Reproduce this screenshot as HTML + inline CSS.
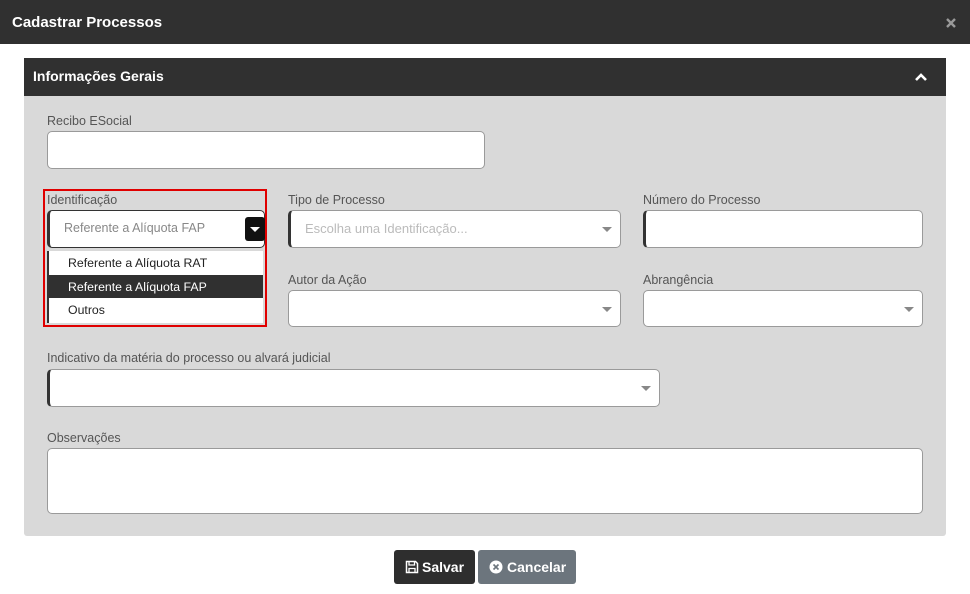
<!DOCTYPE html>
<html><head><meta charset="utf-8"><style>
*{box-sizing:border-box;margin:0;padding:0}
body{width:970px;height:594px;background:#fff;font-family:"Liberation Sans",Arial,sans-serif;position:relative;overflow:hidden}
.a{position:absolute}
.top{left:0;top:0;width:970px;height:44px;background:#303030}
.top h1{position:absolute;left:12px;top:14px;font-size:15px;color:#fff;font-weight:bold}
.ph{left:24px;top:58px;width:922px;height:38px;background:#303030}
.ph span{position:absolute;left:9px;top:10px;font-size:14px;color:#fff;font-weight:bold}
.pb{left:24px;top:96px;width:922px;height:440px;background:#d9d9d9;border-radius:0 0 3px 3px}
.lb{font-size:12.5px;color:#555}
.in{background:#fff;border:1px solid #9a9a9a;border-radius:5px}
.dl{border-left:3px solid #333}
.car{position:absolute;right:8px;top:50%;margin-top:-2px;width:0;height:0;border-left:5px solid transparent;border-right:5px solid transparent;border-top:5px solid #888}
.ph2{font-size:13px;color:#bbb;position:absolute;left:14px;top:10px}
.opt{position:absolute;left:0;width:214px;height:23px;font-size:12.3px;padding:5px 0 0 19px;color:#222}
.btn{top:550px;height:34px;border-radius:3px;color:#fff;font-weight:bold;font-size:14px}
</style></head><body>
<div class="a top"><h1>Cadastrar Processos</h1>
<svg class="a" style="left:946px;top:18px" width="10" height="10"><path d="M1 1L9 9M9 1L1 9" stroke="#999" stroke-width="2.4"/></svg></div>
<div class="a ph"><span>Informações Gerais</span>
<svg class="a" style="left:891px;top:15px" width="12" height="8"><path d="M1 7L6 2L11 7" stroke="#fff" stroke-width="2.6" fill="none"/></svg></div>
<div class="a pb"></div>

<div class="a lb" style="left:47px;top:114px">Recibo ESocial</div>
<div class="a in" style="left:47px;top:131px;width:438px;height:38px"></div>

<div class="a lb" style="left:47px;top:193px">Identificação</div>
<div class="a in dl" style="left:47px;top:210px;width:218px;height:38px;border-color:#333;border-width:1px 1px 1px 3px">
<div class="a" style="left:14px;top:10px;font-size:12.5px;color:#888">Referente a Alíquota FAP</div>
<div class="a" style="left:195px;top:6px;width:20px;height:24px;background:#111;border-radius:3px"><div style="position:absolute;left:5px;top:10px;border-left:5px solid transparent;border-right:5px solid transparent;border-top:5px solid #fff"></div></div></div>
<div class="a" style="left:47px;top:251px;width:216px;height:72px;background:#fff;border-left:2px solid #333">
<div class="opt" style="top:0">Referente a Alíquota RAT</div>
<div class="opt" style="top:24px;background:#303030;color:#fff">Referente a Alíquota FAP</div>
<div class="opt" style="top:47px">Outros</div></div>
<div class="a" style="left:43px;top:189px;width:224px;height:138px;border:2px solid #e00000"></div>

<div class="a lb" style="left:288px;top:193px">Tipo de Processo</div>
<div class="a in dl" style="left:288px;top:210px;width:333px;height:38px"><div class="ph2">Escolha uma Identificação...</div><div class="car"></div></div>
<div class="a lb" style="left:643px;top:193px">Número do Processo</div>
<div class="a in dl" style="left:643px;top:210px;width:280px;height:38px"></div>

<div class="a lb" style="left:288px;top:273px">Autor da Ação</div>
<div class="a in" style="left:288px;top:290px;width:333px;height:37px"><div class="car"></div></div>
<div class="a lb" style="left:643px;top:273px">Abrangência</div>
<div class="a in" style="left:643px;top:290px;width:280px;height:37px"><div class="car"></div></div>

<div class="a lb" style="left:47px;top:351px">Indicativo da matéria do processo ou alvará judicial</div>
<div class="a in dl" style="left:47px;top:369px;width:613px;height:38px"><div class="car"></div></div>

<div class="a lb" style="left:47px;top:431px">Observações</div>
<div class="a in" style="left:47px;top:448px;width:876px;height:66px"></div>

<div class="a btn" style="left:394px;width:81px;background:#2e2e2e">
<svg class="a" style="left:11px;top:10px" width="14" height="14"><path d="M1.5 1.5H10.5L12.5 3.5V12.5H1.5Z" stroke="#fff" stroke-width="1.5" fill="none"/><path d="M4 1.5V5H9.5V1.5M4 12.5V8.5H10V12.5" stroke="#fff" stroke-width="1.3" fill="none"/></svg>
<span class="a" style="left:28px;top:9px">Salvar</span></div>
<div class="a btn" style="left:478px;width:98px;background:#6c757d">
<svg class="a" style="left:11px;top:10px" width="14" height="14"><circle cx="7" cy="7" r="6.5" fill="#fff"/><path d="M4.5 4.5L9.5 9.5M9.5 4.5L4.5 9.5" stroke="#6c757d" stroke-width="1.6"/></svg>
<span class="a" style="left:29px;top:9px">Cancelar</span></div>
</body></html>
